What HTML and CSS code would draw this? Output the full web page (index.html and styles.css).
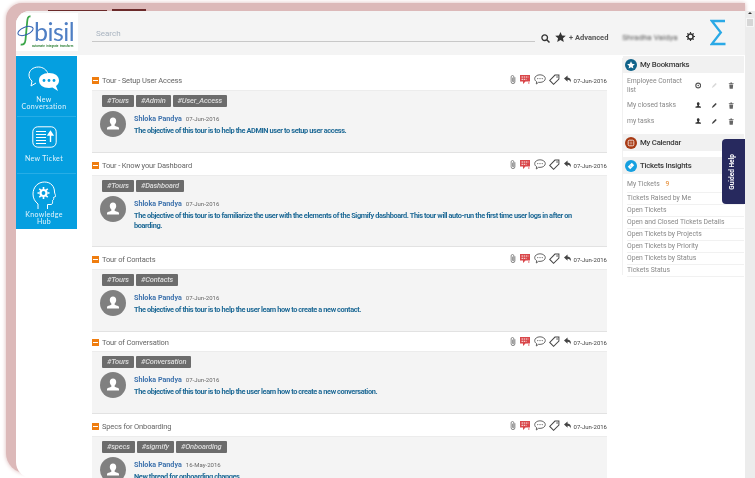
FILE: index.html
```html
<!DOCTYPE html>
<html lang="en">
<head>
    <meta charset="UTF-8">
    <meta name="viewport" content="width=device-width, initial-scale=1.0">
    <title>Threads</title>
    <link rel="stylesheet" href="styles.css">
</head>
<body>

    <svg class="sprites" width="0" height="0">
        <symbol id="i-clip" viewBox="0 0 8 13">
            <path d="M6.500 3.500v6a2.500 2.500 0 0 1-5 0V3a1.800 1.800 0 0 1 3.600 0v6a.8.8 0 0 1-1.600 0V4" fill="none" stroke="#666" stroke-width="1"/>
        </symbol>
        <symbol id="i-redchat" viewBox="0 0 10 11">
            <path d="M0 1h10v6.500H5.500L3 10V7.500H0z" fill="#d9474a"/>
            <path d="M1.500 3h7M1.500 5.300h5" stroke="#fff" stroke-width=".9" stroke-dasharray="1.500 .7"/>
            <path d="M8 9h1.500" stroke="#d9474a"/>
        </symbol>
        <symbol id="i-bubble" viewBox="0 0 12 11">
            <path d="M6 .8c3 0 5.300 1.700 5.300 3.800S9 8.400 6 8.400c-.5 0-1 0-1.400-.1L2.300 10l.3-2.400C1.300 6.900.7 5.800.7 4.600.7 2.500 3 .8 6 .8z" fill="none" stroke="#555" stroke-width=".9"/>
            <circle cx="3.800" cy="4.600" r=".6" fill="#555"/><circle cx="6" cy="4.600" r=".6" fill="#555"/><circle cx="8.200" cy="4.600" r=".6" fill="#555"/>
        </symbol>
        <symbol id="i-tag" viewBox="0 0 12 12">
            <path d="M6.500 1.200h4.300v4.300L5 11.200.8 7z" fill="none" stroke="#444" stroke-width="1.100"/>
            <circle cx="8.800" cy="3.200" r=".8" fill="#444"/>
        </symbol>
        <symbol id="i-reply" viewBox="0 0 9 9">
            <path d="M4 0L0 3.500 4 7V4.800c2 0 3 1 3.500 3.200C8.300 4.500 7 2.300 4 2.200z" fill="#444"/>
        </symbol>
        <symbol id="i-user" viewBox="0 0 26 26">
            <circle cx="13" cy="13" r="13" fill="#808080"/>
            <path d="M13 6.500c-2 0-3.200 1.500-3.200 3.500 0 1.500.7 2.800 1.500 3.500.3.700.1 1.200-.5 1.500-1.500.6-3.200.8-3.800 1.800v1.700h12v-1.700c-.6-1-2.300-1.200-3.800-1.800-.6-.3-.8-.8-.5-1.500.8-.7 1.500-2 1.500-3.500 0-2-1.200-3.500-3.200-3.500z" fill="#fff"/>
        </symbol>
        <symbol id="i-person" viewBox="0 0 8 8">
            <path d="M4 0C2.900 0 2.300.8 2.300 1.900c0 .8.400 1.500.8 1.900.1.400 0 .7-.3.800C1.900 5 .9 5.100.6 5.700v1h6.800v-1c-.3-.6-1.300-.7-2.200-1.100-.3-.1-.4-.4-.3-.8.4-.4.8-1.100.8-1.900C5.700.8 5.100 0 4 0z" fill="#333"/>
        </symbol>
        <symbol id="i-pen" viewBox="0 0 8 8">
            <path d="M1 7l1-2.500L5.800.8l1.400 1.400L3.500 6z" fill="#444"/>
        </symbol>
        <symbol id="i-trash" viewBox="0 0 8 8">
            <path d="M1 1.300h6v.8H1zM3 .3h2v.8H3zM1.600 2.600h4.800L6 8H2z" fill="#666"/>
        </symbol>
        <symbol id="i-gear" viewBox="0 0 10 10">
            <circle cx="5" cy="5" r="2.900" fill="none" stroke="#333" stroke-width="1.700"/>
            <path d="M5 0v2M5 8v2M0 5h2M8 5h2M1.500 1.500l1.400 1.400M7.100 7.100l1.400 1.400M8.500 1.500L7.100 2.900M2.900 7.100L1.500 8.500" stroke="#333" stroke-width="1.300"/>
        </symbol>
    </svg>

    <div class="page">
        <div class="window">
            <div class="window-tabs">
                <span class="window-tab"></span>
                <span class="window-tab tab-short"></span>
            </div>

            <div class="app">
                <header class="topbar">
                    <div class="logo">
                        <svg class="logo-mark" viewBox="0 0 22 32">
                            <path d="M13.500 1.500c-2.500-.5-3 2-3.300 5L8.500 25c-.4 3.500-2 5-4.800 4.500" fill="none" stroke="#3aa648" stroke-width="1.800"/>
                            <ellipse cx="8.500" cy="16" rx="8" ry="3.800" transform="rotate(-22 8.500 16)" fill="none" stroke="#2f5fb0" stroke-width="1"/>
                        </svg>
                        <span class="logo-word">bisil</span>
                        <span class="logo-tag">automate &nbsp;integrate &nbsp;transform</span>
                    </div>

                    <div class="search">Search</div>

                    <div class="topbar-tools">
                        <svg class="tool-search" viewBox="0 0 9 9"><circle cx="3.700" cy="3.700" r="2.800" fill="none" stroke="#333" stroke-width="1.300"/><path d="M5.800 5.800L8.500 8.500" stroke="#333" stroke-width="1.500"/></svg>
                        <svg class="tool-star" viewBox="0 0 12 11"><path d="M6 0l1.700 3.800 4.100.4-3.100 2.700.9 4L6 8.800l-3.600 2.100.9-4L.2 4.200l4.100-.4z" fill="#333"/></svg>
                        <span class="advanced">+ Advanced</span>
                        <span class="user-name">Shradha Vaidya</span>
                        <svg class="tool-gear"><use href="#i-gear"/></svg>
                        <svg class="sigma" viewBox="0 0 16 27"><path d="M15 2H1.800l9 11.500L1.800 25H15.500" fill="none" stroke="#2aa9e6" stroke-width="2.300"/></svg>
                    </div>
                </header>

                <div class="layout">
                    <nav class="sidenav">
                        <a class="sidenav-item item-conv">
                            <svg class="nav-icon conv-icon" viewBox="0 0 32 26">
                                <path d="M20 8c-1-4-5-7-9.500-7C5 1 1 4.500 1 9c0 2.500 1.200 4.500 3 6l-1 5 5-3" fill="none" stroke="#fff" stroke-width="1"/>
                                <path d="M21 7c6 0 10 3 10 7.500 0 2.500-1.200 4.300-3 5.500l2 5-5.500-3.500c-1 .2-2.300.4-3.500.4-6 0-10-3-10-7.500S15 7 21 7z" fill="#fff"/>
                                <circle cx="16" cy="14.500" r="1.400" fill="#059fe0"/><circle cx="21" cy="14.500" r="1.400" fill="#059fe0"/><circle cx="26" cy="14.500" r="1.400" fill="#059fe0"/>
                            </svg>
                            <span>New<br>Conversation</span>
                        </a>
                        <a class="sidenav-item item-ticket">
                            <svg class="nav-icon ticket-icon" viewBox="0 0 25 22">
                                <rect x=".8" y=".8" width="23.400" height="20.400" rx="5" fill="none" stroke="#fff" stroke-width="1"/>
                                <path d="M4 5.500h10M4 8.500h10M4 11.500h10M4 14.500h10M4 17.500h10" stroke="#fff" stroke-width="1"/>
                                <path d="M18.500 16V7M16.200 9l2.300-3.500L20.800 9z" stroke="#fff" stroke-width="1.400" fill="#fff"/>
                            </svg>
                            <span>New Ticket</span>
                        </a>
                        <a class="sidenav-item item-hub">
                            <svg class="nav-icon hub-icon" viewBox="0 0 24 30">
                                <path d="M6 28v-5C3 20.500 1 17.500 1 13 1 6 6 1 12.500 1S22.500 5.500 22.500 11c0 1.500 1.500 3.500 1 4.500l-2 1c.5 1.500 0 2.500-1 3 .3 1.500 0 3.500-1 4h-4V28" fill="none" stroke="#fff" stroke-width="1"/>
                                <circle cx="11.500" cy="12" r="3" fill="none" stroke="#fff" stroke-width="2.200"/>
                                <path d="M11.500 6v2M11.500 16v2M5.500 12h2M15.500 12h2M7.300 7.800l1.400 1.400M14.300 14.800l1.400 1.400M15.700 7.800l-1.400 1.400M8.700 14.800l-1.400 1.400" stroke="#fff" stroke-width="1.600"/>
                            </svg>
                            <span>Knowledge<br>Hub</span>
                        </a>
                    </nav>

                    <main class="threads">
                        <section class="thread">
                            <div class="thread-title">
                                <span class="collapse"></span>
                                <h2>Tour - Setup User Access</h2>
                                <div class="thread-meta">
                                    <svg class="m-clip"><use href="#i-clip"/></svg>
                                    <svg class="m-red"><use href="#i-redchat"/></svg>
                                    <svg class="m-bubble"><use href="#i-bubble"/></svg>
                                    <svg class="m-tag"><use href="#i-tag"/></svg>
                                    <svg class="m-reply"><use href="#i-reply"/></svg>
                                    <span class="meta-date">07-Jun-2016</span>
                                </div>
                            </div>
                            <div class="thread-card">
                                <div class="tags"><span class="tag">#Tours</span><span class="tag">#Admin</span><span class="tag">#User_Access</span></div>
                                <div class="post">
                                    <svg class="avatar"><use href="#i-user"/></svg>
                                    <div class="post-body">
                                        <div class="post-head"><a class="author">Shloka Pandya</a><span class="post-date">07-Jun-2016</span></div>
                                        <p>The objective of this tour is to help the ADMIN user to setup user access.</p>
                                    </div>
                                </div>
                            </div>
                        </section>

                        <section class="thread">
                            <div class="thread-title">
                                <span class="collapse"></span>
                                <h2>Tour - Know your Dashboard</h2>
                                <div class="thread-meta">
                                    <svg class="m-clip"><use href="#i-clip"/></svg>
                                    <svg class="m-red"><use href="#i-redchat"/></svg>
                                    <svg class="m-bubble"><use href="#i-bubble"/></svg>
                                    <svg class="m-tag"><use href="#i-tag"/></svg>
                                    <svg class="m-reply"><use href="#i-reply"/></svg>
                                    <span class="meta-date">07-Jun-2016</span>
                                </div>
                            </div>
                            <div class="thread-card card-tall">
                                <div class="tags"><span class="tag">#Tours</span><span class="tag">#Dashboard</span></div>
                                <div class="post">
                                    <svg class="avatar"><use href="#i-user"/></svg>
                                    <div class="post-body">
                                        <div class="post-head"><a class="author">Shloka Pandya</a><span class="post-date">07-Jun-2016</span></div>
                                        <p>The objective of this tour is to familiarize the user with the elements of the Sigmify dashboard. This tour will auto-run the first time user logs in after on boarding.</p>
                                    </div>
                                </div>
                            </div>
                        </section>

                        <section class="thread">
                            <div class="thread-title">
                                <span class="collapse"></span>
                                <h2>Tour of Contacts</h2>
                                <div class="thread-meta">
                                    <svg class="m-clip"><use href="#i-clip"/></svg>
                                    <svg class="m-red"><use href="#i-redchat"/></svg>
                                    <svg class="m-bubble"><use href="#i-bubble"/></svg>
                                    <svg class="m-tag"><use href="#i-tag"/></svg>
                                    <svg class="m-reply"><use href="#i-reply"/></svg>
                                    <span class="meta-date">07-Jun-2016</span>
                                </div>
                            </div>
                            <div class="thread-card">
                                <div class="tags"><span class="tag">#Tours</span><span class="tag">#Contacts</span></div>
                                <div class="post">
                                    <svg class="avatar"><use href="#i-user"/></svg>
                                    <div class="post-body">
                                        <div class="post-head"><a class="author">Shloka Pandya</a><span class="post-date">07-Jun-2016</span></div>
                                        <p>The objective of this tour is to help the user learn how to create a new contact.</p>
                                    </div>
                                </div>
                            </div>
                        </section>

                        <section class="thread thread-tight">
                            <div class="thread-title">
                                <span class="collapse"></span>
                                <h2>Tour of Conversation</h2>
                                <div class="thread-meta">
                                    <svg class="m-clip"><use href="#i-clip"/></svg>
                                    <svg class="m-red"><use href="#i-redchat"/></svg>
                                    <svg class="m-bubble"><use href="#i-bubble"/></svg>
                                    <svg class="m-tag"><use href="#i-tag"/></svg>
                                    <svg class="m-reply"><use href="#i-reply"/></svg>
                                    <span class="meta-date">07-Jun-2016</span>
                                </div>
                            </div>
                            <div class="thread-card">
                                <div class="tags"><span class="tag">#Tours</span><span class="tag">#Conversation</span></div>
                                <div class="post">
                                    <svg class="avatar"><use href="#i-user"/></svg>
                                    <div class="post-body">
                                        <div class="post-head"><a class="author">Shloka Pandya</a><span class="post-date">07-Jun-2016</span></div>
                                        <p>The objective of this tour is to help the user learn how to create a new conversation.</p>
                                    </div>
                                </div>
                            </div>
                        </section>

                        <section class="thread">
                            <div class="thread-title">
                                <span class="collapse"></span>
                                <h2>Specs for Onboarding</h2>
                                <div class="thread-meta">
                                    <svg class="m-clip"><use href="#i-clip"/></svg>
                                    <svg class="m-red"><use href="#i-redchat"/></svg>
                                    <svg class="m-bubble"><use href="#i-bubble"/></svg>
                                    <svg class="m-tag"><use href="#i-tag"/></svg>
                                    <svg class="m-reply"><use href="#i-reply"/></svg>
                                    <span class="meta-date">07-Jun-2016</span>
                                </div>
                            </div>
                            <div class="thread-card">
                                <div class="tags"><span class="tag">#specs</span><span class="tag">#sigmify</span><span class="tag">#Onboarding</span></div>
                                <div class="post">
                                    <svg class="avatar"><use href="#i-user"/></svg>
                                    <div class="post-body">
                                        <div class="post-head"><a class="author">Shloka Pandya</a><span class="post-date">16-May-2016</span></div>
                                        <p>New thread for onboarding changes.</p>
                                    </div>
                                </div>
                            </div>
                        </section>
                    </main>

                    <aside class="sidebar">
                        <div class="panel-head">
                            <span class="panel-icon icon-bookmarks"><svg viewBox="0 0 12 11"><path d="M6 0l1.700 3.800 4.100.4-3.100 2.700.9 4L6 8.800l-3.600 2.100.9-4L.2 4.200l4.100-.4z" fill="#fff"/></svg></span>
                            My Bookmarks
                        </div>
                        <ul class="bookmarks">
                            <li class="bookmark-first">
                                <span class="bookmark-name">Employee Contact list</span>
                                <svg viewBox="0 0 8 8"><circle cx="4" cy="4" r="3" fill="none" stroke="#555" stroke-width="1.400"/><circle cx="4" cy="4" r="1" fill="#555"/></svg>
                                <svg class="faded"><use href="#i-pen"/></svg>
                                <svg><use href="#i-trash"/></svg>
                            </li>
                            <li>
                                <span class="bookmark-name">My closed tasks</span>
                                <svg><use href="#i-person"/></svg>
                                <svg><use href="#i-pen"/></svg>
                                <svg><use href="#i-trash"/></svg>
                            </li>
                            <li>
                                <span class="bookmark-name">my tasks</span>
                                <svg><use href="#i-person"/></svg>
                                <svg><use href="#i-pen"/></svg>
                                <svg><use href="#i-trash"/></svg>
                            </li>
                        </ul>

                        <div class="panel-head head-calendar">
                            <span class="panel-icon icon-calendar"><svg viewBox="0 0 10 10"><rect x="1.500" y="1.500" width="7" height="7" rx="1.500" fill="none" stroke="#fff" stroke-width="1"/><path d="M3.500 4h1M5.500 4h1M3.500 6h1M5.500 6h1" stroke="#fff"/></svg></span>
                            My Calendar
                        </div>

                        <div class="panel-head head-tickets">
                            <span class="panel-icon icon-tickets"><svg viewBox="0 0 10 10"><path d="M1 6l5-5 3 3-5 5z" fill="#fff"/><path d="M4 4.500l1.500 1.500" stroke="#16a0e0" stroke-dasharray="1 .6"/></svg></span>
                            Tickets Insights
                        </div>
                        <ul class="tickets">
                            <li class="ticket-count">My Tickets <b>9</b></li>
                            <li>Tickets Raised by Me</li>
                            <li>Open Tickets</li>
                            <li>Open and Closed Tickets Details</li>
                            <li>Open Tickets by Projects</li>
                            <li>Open Tickets by Priority</li>
                            <li>Open Tickets by Status</li>
                            <li>Tickets Status</li>
                        </ul>
                    </aside>

                    <a class="guided-help"><span>Guided Help</span></a>
                </div>
            </div>
        </div>

        <div class="scrollbar">
            <span class="scroll-arrow"></span>
            <span class="scroll-thumb"></span>
        </div>
    </div>

</body>
</html>
```

FILE: styles.css
```css
html, body {
    height: 100%;
    margin: 0;
    padding: 0;
    overflow: hidden;
}

body {
    font-family: 'Roboto', 'Liberation Sans', sans-serif;
    background-color: #fff;
    color: #555;
}

.sprites {
    display: block;
    height: 0;
}

.page {
    display: flex;
    height: 478px;
    padding-left: 6px;
    box-sizing: border-box;
    filter: blur(.35px);
}

.window {
    width: 739px;
    height: 470px;
    margin-top: 3px;
    padding-left: 10px;
    box-sizing: border-box;
    background-color: #dcb9b9;
    border-radius: 16px 0 0 20px;
    box-shadow: 0 0 4px #dcb9b9;
}

.window-tabs {
    display: flex;
    align-items: flex-end;
    gap: 5px;
    height: 8px;
    padding-left: 32px;
}

.window-tab {
    display: block;
    width: 59px;
    height: 1px;
    background-color: #6b2a2a;
}

.tab-short {
    width: 34px;
    height: 2px;
}

.app {
    height: 467px;
    background-color: #fff;
    border-radius: 14px 0 0 16px;
    overflow: hidden;
}

/* top bar */
.topbar {
    display: flex;
    height: 44px;
    background-color: #f4f4f4;
}

.logo {
    position: relative;
    width: 62px;
    height: 38px;
    margin-top: 2px;
    background-color: #fff;
    flex-shrink: 0;
}

.logo-mark {
    position: absolute;
    left: 1px;
    top: 2px;
    width: 22px;
    height: 32px;
}

.logo-word {
    position: absolute;
    left: 18px;
    top: 8px;
    font-family: 'Lato', sans-serif;
    font-size: 25px;
    line-height: 20px;
    letter-spacing: -.5px;
    color: #4f7fc4;
}

.logo-tag {
    position: absolute;
    left: 16px;
    top: 31px;
    font-size: 3px;
    line-height: 4px;
    font-weight: 700;
    color: #3d8a45;
    white-space: nowrap;
}

.search {
    width: 443px;
    height: 31px;
    margin-left: 14px;
    padding: 17px 0 0 4px;
    box-sizing: border-box;
    border-bottom: 1px solid #c8c8c8;
    font-size: 8px;
    line-height: 11px;
    color: #a9b4c0;
}

.topbar-tools {
    display: flex;
    align-items: center;
    flex: 1;
    height: 44px;
    padding-top: 2px;
    box-sizing: border-box;
}

.tool-search {
    width: 9px;
    height: 9px;
    margin: 8px 0 0 6px;
}

.tool-star {
    width: 11px;
    height: 10px;
    margin: 6px 0 0 5px;
}

.advanced {
    margin: 6px 0 0 3px;
    font-size: 7.500px;
    font-weight: 700;
    color: #555;
    white-space: nowrap;
}

.user-name {
    width: 46px;
    margin: 6px 0 0 14px;
    font-size: 8px;
    color: #555;
    white-space: nowrap;
    filter: blur(1px);
}

.tool-gear {
    width: 9px;
    height: 9px;
    margin: 4px 0 0 18px;
}

.sigma {
    width: 16px;
    height: 27px;
    margin: -4px 0 0 15px;
}

/* left nav */
.layout {
    position: relative;
    display: flex;
    margin-top: 1px;
}

.sidenav {
    width: 61px;
    height: 173px;
    background-color: #059fe0;
    flex-shrink: 0;
}

.sidenav-item {
    display: flex;
    flex-direction: column;
    align-items: center;
    box-sizing: border-box;
    margin: 0 1px;
    padding-right: 5px;
    border-bottom: 1px solid #27ade6;
    font-family: 'Lato', sans-serif;
    font-size: 7px;
    line-height: 7px;
    letter-spacing: .35px;
    text-align: center;
    color: #e4f5fd;
}

.item-conv {
    height: 61px;
    padding-top: 10px;
}

.item-ticket {
    height: 57px;
    padding-top: 9px;
}

.item-hub {
    height: 54px;
    padding-top: 7px;
    border-bottom: 0;
}

.nav-icon {
    display: block;
}

.conv-icon {
    width: 32px;
    height: 26px;
    margin-bottom: 4px;
}

.ticket-icon {
    width: 25px;
    height: 22px;
    margin-bottom: 7px;
}

.hub-icon {
    width: 24px;
    height: 30px;
}

/* threads */
.threads {
    width: 515px;
    margin-left: 15px;
    padding-top: 12px;
    flex-shrink: 0;
}

.thread-title {
    display: flex;
    align-items: center;
    height: 22px;
    padding-top: 2px;
    box-sizing: border-box;
}

.thread-tight .thread-title {
    height: 19px;
}

.collapse {
    position: relative;
    width: 7px;
    height: 7px;
    margin-right: 3px;
    background-color: #ef7d0f;
    flex-shrink: 0;
}

.collapse::after {
    content: '';
    position: absolute;
    left: 1px;
    right: 1px;
    top: 3px;
    height: 1px;
    background-color: #fff;
}

.thread-title h2 {
    flex: 1;
    margin: 0;
    font-size: 7.500px;
    font-weight: 400;
    letter-spacing: -.15px;
    color: #666;
}

.thread-meta {
    display: flex;
    align-items: center;
    margin-top: -2px;
}

.thread-meta svg {
    display: block;
}

.m-clip {
    width: 6px;
    height: 11px;
}

.m-red {
    width: 10px;
    height: 11px;
    margin-left: 4px;
}

.m-bubble {
    width: 12px;
    height: 11px;
    margin-left: 4px;
}

.m-tag {
    width: 11px;
    height: 11px;
    margin-left: 3px;
}

.m-reply {
    width: 8px;
    height: 9px;
    margin-left: 4px;
}

.meta-date {
    margin: 2px 0 0 2px;
    font-size: 6px;
    color: #444;
}

.thread-card {
    height: 63px;
    padding: 4px 0 0 10px;
    box-sizing: border-box;
    background-color: #f4f4f4;
    border-top: 1px solid #ececec;
    border-bottom: 1px solid #e2e2e2;
}

.card-tall {
    height: 72px;
}

.tags {
    display: flex;
    gap: 2px;
}

.tag {
    height: 12px;
    padding: 0 5px;
    background-color: #6c6c6c;
    border-radius: 1px;
    font-size: 7.500px;
    font-style: italic;
    font-weight: 500;
    letter-spacing: -.15px;
    line-height: 12px;
    color: #ddd;
}

.post {
    display: flex;
    margin: 4px 0 0 -2px;
}

.avatar {
    display: block;
    width: 26px;
    height: 26px;
    flex-shrink: 0;
}

.post-body {
    flex: 1;
    margin-left: 8px;
    padding: 1px 20px 0 0;
}

.post-head {
    display: flex;
    align-items: baseline;
    height: 14px;
}

.author {
    font-size: 7.200px;
    font-weight: 700;
    line-height: 14px;
    color: #3f73ad;
}

.post-date {
    margin-left: 4px;
    font-size: 6px;
    color: #666;
}

.post-body p {
    margin: 0;
    font-size: 7.400px;
    font-weight: 700;
    letter-spacing: -.4px;
    line-height: 10px;
    color: #1f6a96;
}

/* right column */
.sidebar {
    width: 121px;
    height: 221px;
    margin-left: 16px;
    flex-shrink: 0;
    box-shadow: -3px 0 0 -2px #f1f1f1;
}

.panel-head {
    display: flex;
    align-items: center;
    height: 17px;
    padding-left: 2px;
    background-color: #f1f1f1;
    font-size: 7.800px;
    font-weight: 500;
    letter-spacing: -.25px;
    color: #3a3a3a;
}

.panel-icon {
    display: flex;
    align-items: center;
    justify-content: center;
    width: 12px;
    height: 12px;
    margin-right: 3px;
    border-radius: 50%;
}

.panel-icon svg {
    display: block;
    width: 8px;
    height: 8px;
}

.icon-bookmarks {
    background-color: #10638a;
}

.icon-calendar {
    background-color: #a83a14;
}

.icon-tickets {
    background-color: #16a0e0;
}

.head-tickets {
    margin-top: 6px;
}

.bookmarks,
.tickets {
    margin: 0;
    padding: 0;
    list-style: none;
}

.bookmarks {
    height: 61px;
    padding-top: 1px;
    box-sizing: border-box;
    font-size: 6.800px;
    line-height: 9px;
    color: #888;
}

.bookmarks li {
    display: flex;
    align-items: center;
    height: 16px;
    padding-left: 4px;
}

.bookmarks .bookmark-first {
    height: 23px;
}

.bookmark-name {
    width: 63px;
    margin-right: 10px;
}

.bookmarks svg {
    display: block;
    width: 7px;
    height: 7px;
    margin-right: 10px;
}

.bookmarks .faded {
    opacity: .2;
}

.tickets {
    padding-left: 4px;
    font-size: 6.800px;
    color: #888;
}

.tickets li {
    height: 11px;
    line-height: 11px;
    border-bottom: 1px solid #f1f1f1;
}

.tickets .ticket-count {
    height: 13px;
    padding-top: 5px;
}

.ticket-count b {
    margin-left: 4px;
    font-weight: 500;
    color: #e99a4c;
}

.guided-help {
    position: absolute;
    right: 0;
    top: 83px;
    display: flex;
    align-items: center;
    justify-content: center;
    width: 23px;
    height: 65px;
    padding-right: 4px;
    box-sizing: border-box;
    background-color: #27295e;
    border-radius: 4px 0 0 4px;
    font-size: 6.500px;
    font-weight: 700;
    color: #fff;
}

.guided-help span {
    writing-mode: vertical-rl;
    transform: rotate(180deg);
}

/* scrollbar */
.scrollbar {
    display: flex;
    flex-direction: column;
    align-items: center;
    width: 10px;
    margin-top: 11px;
    background-color: #ececec;
}

.scroll-arrow {
    width: 0;
    height: 0;
    margin-top: 1px;
    border-left: 2px solid transparent;
    border-right: 2px solid transparent;
    border-bottom: 2px solid #333;
}

.scroll-thumb {
    width: 8px;
    height: 9px;
    margin-top: 4px;
    background-color: #d6d6d6;
    border: 1px solid #f6f6f6;
    box-sizing: border-box;
}
```
